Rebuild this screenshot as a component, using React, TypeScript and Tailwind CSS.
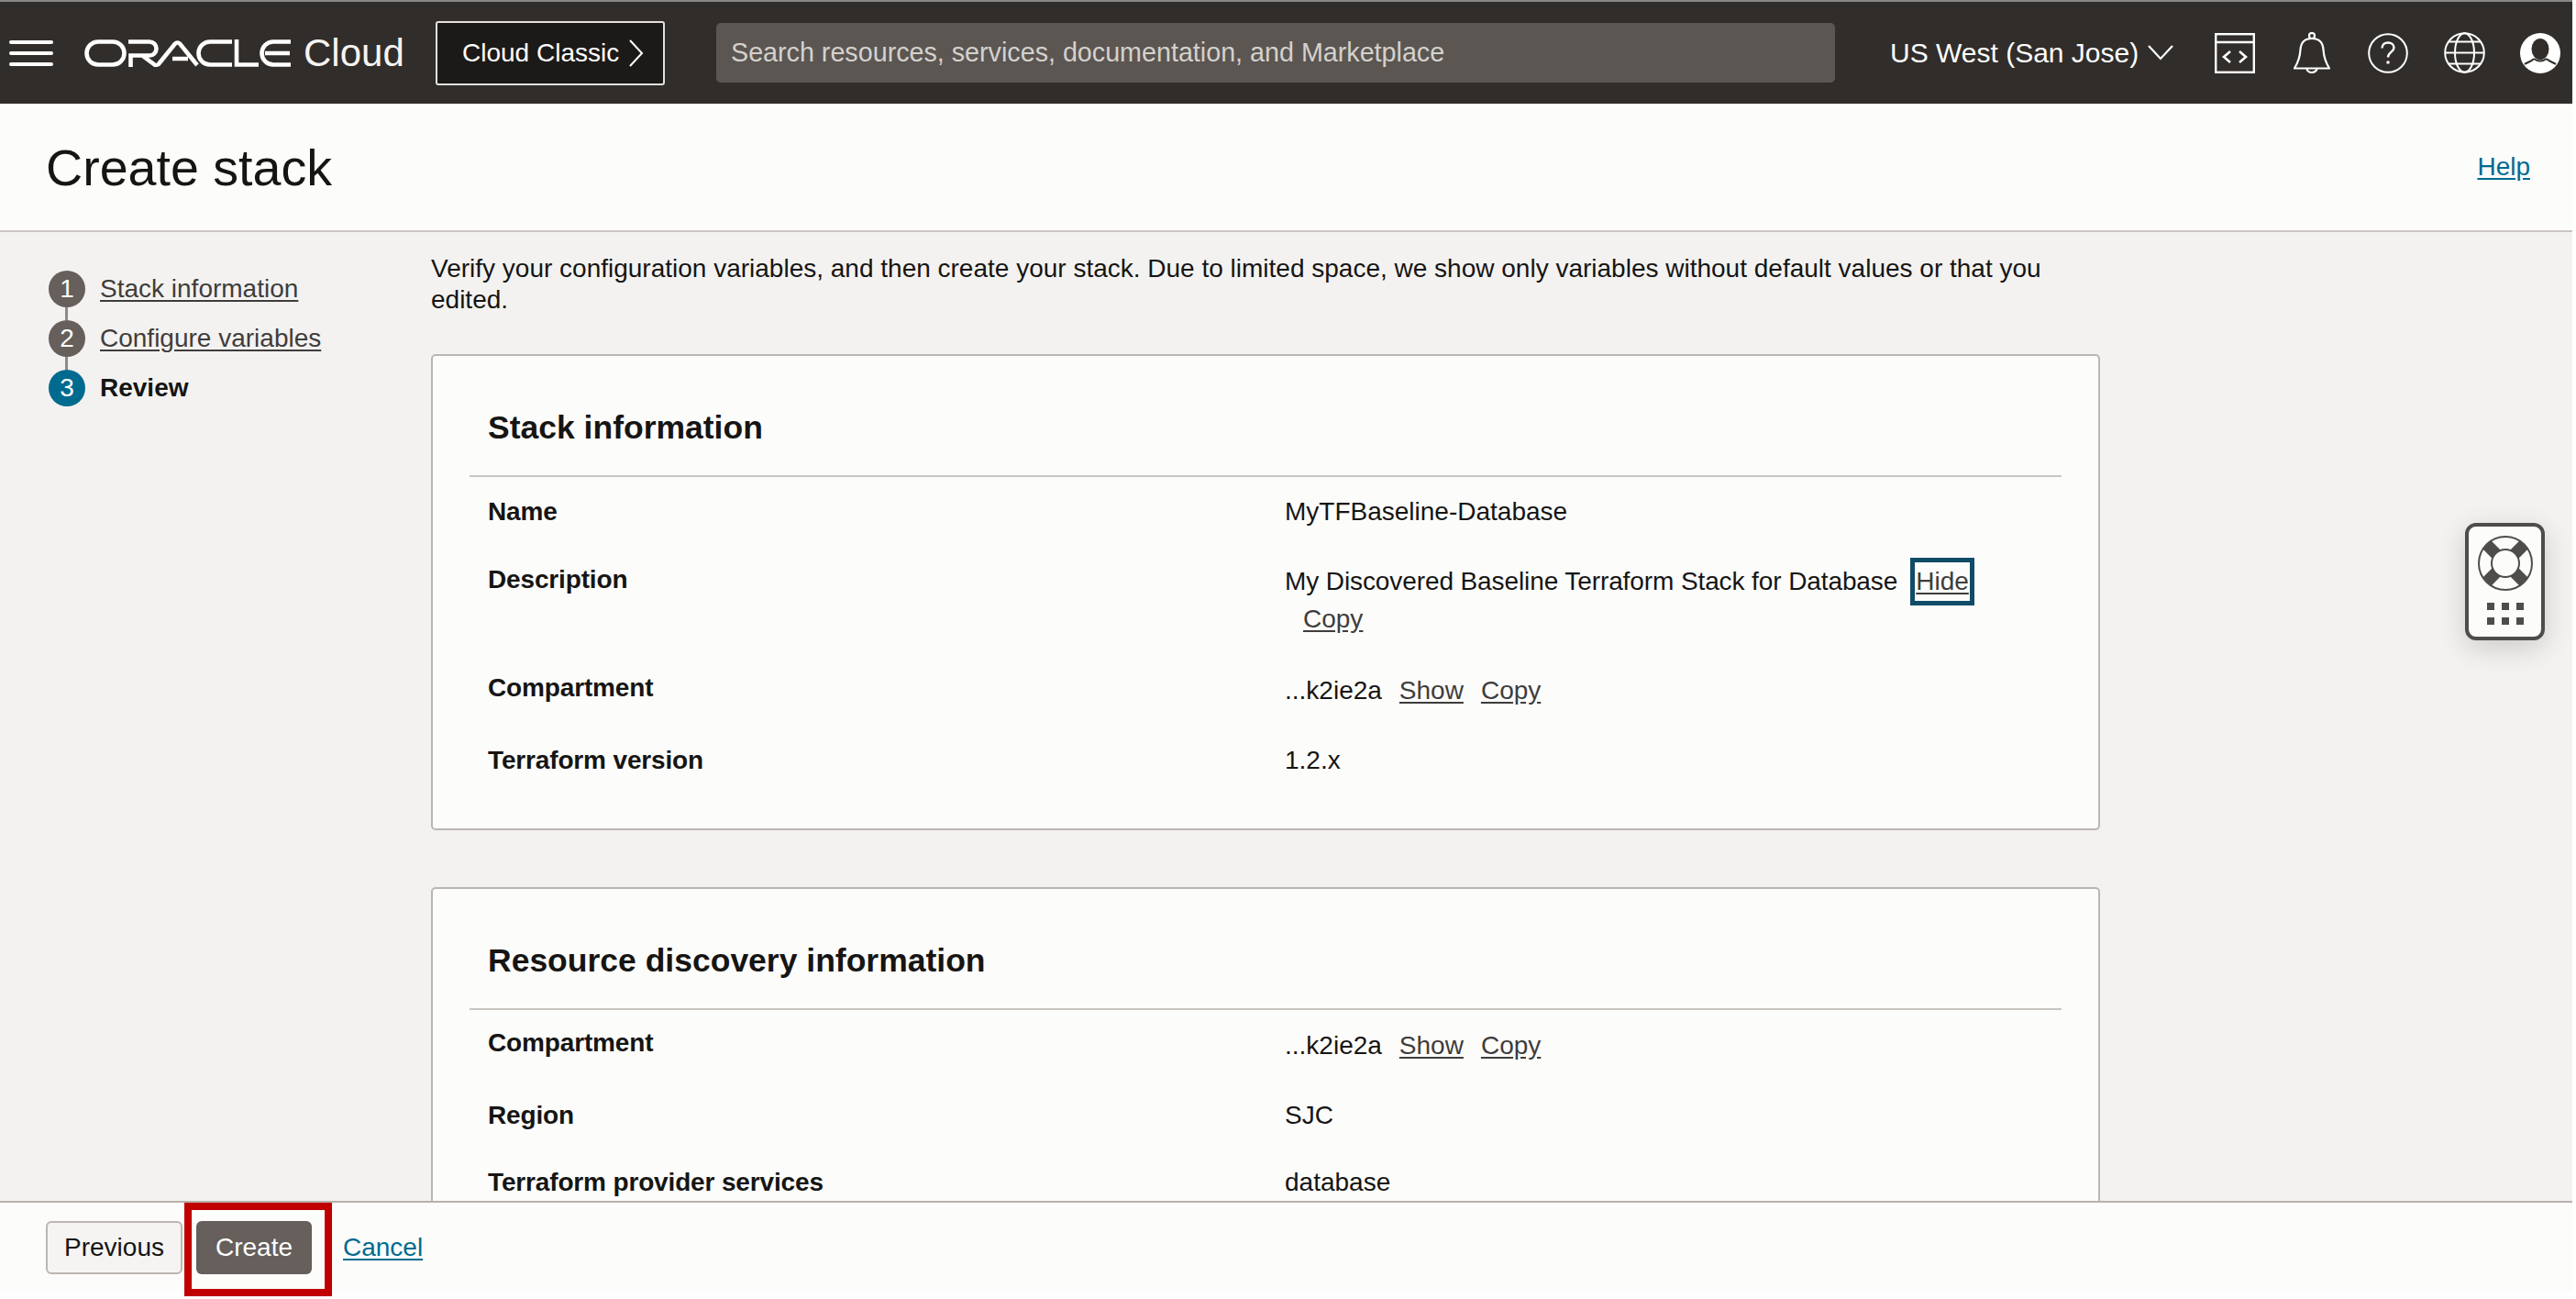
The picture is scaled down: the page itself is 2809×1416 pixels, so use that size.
import React from "react";

const link = "underline underline-offset-[3px] text-[#3f3d3b]";

function OracleLogo() {
  return (
    <svg width="226" height="30" viewBox="0 0 226 30" fill="none" stroke="#fff" strokeWidth="4.6" className="shrink-0">
      <rect x="2.5" y="2.5" width="41" height="25" rx="12.5" />
      <path d="M48 2.5H71a7.5 7.5 0 0 1 0 15H50.5V30M63 17.5L80 30" />
      <path d="M80 28L99 4.5a3.5 3.5 0 0 1 5 0L123 28M96 21H113" />
      <path d="M161 2.5H137a12.5 12.5 0 0 0 0 25H161" />
      <path d="M166 0V27.5H190" />
      <path d="M225 2.5H206a12.5 12.5 0 0 0 0 25H225M197 15H224" />
    </svg>
  );
}

function CodeIcon() {
  return (
    <svg width="44" height="44" viewBox="0 0 44 44" fill="none" stroke="#fff" strokeWidth="2.4" className="shrink-0">
      <rect x="1.2" y="1.2" width="41.6" height="41.6" />
      <path d="M1 10H43" />
      <path d="M17 20L10 26L17 32M27 20L34 26L27 32" strokeWidth="2.6" />
    </svg>
  );
}

function BellIcon() {
  return (
    <svg width="40" height="45" viewBox="0 0 40 45" fill="none" stroke="#fff" strokeWidth="2.2" className="shrink-0">
      <circle cx="20" cy="4" r="3" />
      <path d="M20 7C12 7 8 12 7.5 19C7 28 5 33 1 39.5H39C35 33 33 28 32.5 19C32 12 28 7 20 7Z" strokeLinejoin="round" />
      <path d="M14.5 39.5a5.5 4.5 0 0 0 11 0" />
    </svg>
  );
}

function HelpIcon() {
  return (
    <svg width="44" height="44" viewBox="0 0 44 44" fill="none" stroke="#fff" strokeWidth="2" className="shrink-0">
      <circle cx="22" cy="22" r="20.8" />
      <path d="M15.5 16.5C15.5 12.5 18.5 10.5 22 10.5C25.5 10.5 28.5 12.5 28.5 16C28.5 20.5 22 21 22 26.5" strokeWidth="2.4" />
      <circle cx="22" cy="32" r="1.8" fill="#fff" stroke="none" />
    </svg>
  );
}

function GlobeIcon() {
  return (
    <svg width="45" height="45" viewBox="0 0 45 45" fill="none" stroke="#fff" strokeWidth="2" className="shrink-0">
      <circle cx="22.5" cy="22.5" r="21.3" />
      <ellipse cx="22.5" cy="22.5" rx="10.5" ry="21.3" />
      <path d="M1 22.5H44M5 10.5H40M5 34.5H40" />
    </svg>
  );
}

function AvatarIcon() {
  return (
    <svg width="44" height="44" viewBox="0 0 44 44" className="shrink-0">
      <circle cx="22" cy="22" r="22" fill="#fff" />
      <ellipse cx="22" cy="17.5" rx="9.5" ry="11.5" fill="#312d2a" />
      <path d="M15 28C14 30 8 32 5 34" stroke="#312d2a" strokeWidth="2" fill="none" />
      <path d="M29 28C30 30 36 32 39 34" stroke="#312d2a" strokeWidth="2" fill="none" />
      <path d="M15 28Q22 33 29 28" stroke="#312d2a" strokeWidth="2" fill="none" />
    </svg>
  );
}

function TopBar() {
  return (
    <header className="h-[113px] shrink-0 flex items-center bg-[#312d2a] border-t-2 border-[#8a8886] pl-[10px] text-white">
      <div className="flex flex-col gap-[8px] w-[48px] shrink-0">
        <span className="h-[4px] rounded bg-white" />
        <span className="h-[4px] rounded bg-white" />
        <span className="h-[4px] rounded bg-white" />
      </div>
      <div className="ml-[34px]">
        <OracleLogo />
      </div>
      <span className="ml-[13px] w-[144px] text-[42px] leading-none text-[#f5f4f2]">Cloud</span>
      <button className="h-[70px] w-[250px] flex items-center pl-[27px] bg-[#1c1a18] border-2 border-[#e4e1dd] rounded-[3px] text-[28px] shrink-0">
        Cloud Classic
        <svg width="16" height="30" viewBox="0 0 16 30" fill="none" stroke="#fff" strokeWidth="2" className="ml-[11px]">
          <path d="M1 1L14 15L1 29" />
        </svg>
      </button>
      <div className="ml-[56px] h-[65px] w-[1220px] shrink-0 rounded-[5px] bg-[#5b5652] flex items-center pl-[16px] text-[28.7px] text-[#d4d1cd]">
        Search resources, services, documentation, and Marketplace
      </div>
      <span className="ml-[60px] text-[30px] shrink-0 whitespace-nowrap">US West (San Jose)</span>
      <svg width="28" height="17" viewBox="0 0 28 17" fill="none" stroke="#fff" strokeWidth="2.2" className="ml-[10px] shrink-0">
        <path d="M1 1L14 15L27 1" />
      </svg>
      <div className="ml-[45px] flex items-center">
        <CodeIcon />
        <span className="ml-[42px]"><BellIcon /></span>
        <span className="ml-[41px]"><HelpIcon /></span>
        <span className="ml-[39px]"><GlobeIcon /></span>
        <span className="ml-[38px]"><AvatarIcon /></span>
      </div>
    </header>
  );
}

function Step({ n, label, active }: { n: number; label: string; active?: boolean }) {
  return (
    <div className="h-[40px] flex items-center gap-[16px]">
      <span className={`w-[40px] h-[40px] rounded-full flex items-center justify-center text-white text-[28px] ${active ? "bg-[#006b8f]" : "bg-[#665f5b]"}`}>
        {n}
      </span>
      {active ? <span className="font-bold text-[#161513]">{label}</span> : <a className={link}>{label}</a>}
    </div>
  );
}

function Connector() {
  return <div className="w-[3px] h-[14px] ml-[18px] bg-[#8f8a85]" />;
}

function Sidebar() {
  return (
    <aside className="w-[470px] shrink-0 pl-[53px] pt-[42px] text-[28px]">
      <Step n={1} label="Stack information" />
      <Connector />
      <Step n={2} label="Configure variables" />
      <Connector />
      <Step n={3} label="Review" active />
    </aside>
  );
}

function Row({ label, h, children }: { label: string; h: string; children: React.ReactNode }) {
  return (
    <div className={`grid grid-cols-[869px_1fr] pl-[20px] ${h}`}>
      <div className="font-bold leading-[34px] tracking-[-0.15px]">{label}</div>
      <div className="leading-[34px]">{children}</div>
    </div>
  );
}

function OcidValue() {
  return (
    <div className="flex gap-[19px] mt-[3px]">
      <span>...k2ie2a</span>
      <a className={link}>Show</a>
      <a className={link}>Copy</a>
    </div>
  );
}

function Card({ title, cls, rowsCls, children }: { title: string; cls: string; rowsCls: string; children: React.ReactNode }) {
  return (
    <section className={`w-[1820px] shrink-0 bg-[#fcfcfb] border-2 border-[#bcb6b1] rounded-[5px] px-[40px] ${cls}`}>
      <h2 className="pt-[56px] pb-[30px] pl-[20px] text-[35.5px] leading-[44px] font-bold border-b-2 border-[#c9c5c0]">{title}</h2>
      <div className={`text-[28px] ${rowsCls}`}>{children}</div>
    </section>
  );
}

function Widget() {
  return (
    <div className="absolute right-[30px] top-[317px] w-[87px] h-[128px] bg-[#fcfcfb] border-4 border-[#4f4d4a] rounded-[12px] shadow-[0_8px_30px_rgba(0,0,0,0.16)] flex flex-col items-center pt-[10px]">
      <svg width="60" height="60" viewBox="0 0 60 60">
        <circle cx="30" cy="30" r="29" fill="#fcfcfb" stroke="#4f4d4a" strokeWidth="2" />
        <g stroke="#4f4d4a" strokeWidth="13">
          <path d="M10 10L20 20M50 10L40 20M10 50L20 40M50 50L40 40" />
        </g>
        <circle cx="30" cy="30" r="15" fill="#fcfcfb" stroke="#4f4d4a" strokeWidth="2" />
      </svg>
      <div className="mt-[13px] grid grid-cols-3 gap-x-[8px] gap-y-[8px]">
        {[0, 1, 2, 3, 4, 5].map((i) => (
          <span key={i} className="w-[8px] h-[8px] bg-[#4f4d4a]" />
        ))}
      </div>
    </div>
  );
}

export default function App() {
  return (
    <div className="w-[2809px] h-[1416px] bg-white overflow-hidden text-[#161513] font-['Liberation_Sans',Arial,sans-serif]">
      <div className="relative w-[2805px] h-[1409px] flex flex-col bg-[#f3f2f1]">
        <TopBar />
        <div className="h-[140px] shrink-0 flex items-center justify-between bg-[#fcfcfb] border-b-2 border-[#c9c5c0] pl-[50px] pr-[46px]">
          <h1 className="mt-[3px] text-[55.6px] leading-none font-normal">Create stack</h1>
          <a className="text-[28px] underline underline-offset-[3px] text-[#006b8f]">Help</a>
        </div>
        <main className="relative flex-1 min-h-0 flex overflow-hidden">
          <Sidebar />
          <div className="flex flex-col pt-[23px]">
            <p className="w-[1800px] text-[28px] leading-[34px]">
              Verify your configuration variables, and then create your stack. Due to limited space, we show only variables without default values or that you edited.
            </p>
            <Card title="Stack information" cls="mt-[42px] h-[519px]" rowsCls="pt-[21px]">
              <Row label="Name" h="h-[74px]">MyTFBaseline-Database</Row>
              <Row label="Description" h="h-[118px]">
                <div className="h-[41px] -mt-[2px] flex items-center gap-[19px] whitespace-nowrap">
                  <span className="tracking-[-0.1px]">My Discovered Baseline Terraform Stack for Database</span>
                  <a className={`${link} inline-block leading-[42px] px-[1px] outline-[5px] outline-solid outline-[#0f4c67]`}>Hide</a>
                </div>
                <a className={`${link} block leading-[41px] ml-[20px]`}>Copy</a>
              </Row>
              <Row label="Compartment" h="h-[79px]"><OcidValue /></Row>
              <Row label="Terraform version" h="h-[79px]">1.2.x</Row>
            </Card>
            <Card title="Resource discovery information" cls="mt-[62px] h-[500px]" rowsCls="pt-[19px]">
              <Row label="Compartment" h="h-[79px]"><OcidValue /></Row>
              <Row label="Region" h="h-[73px]">SJC</Row>
              <Row label="Terraform provider services" h="h-[79px]">database</Row>
            </Card>
          </div>
          <Widget />
        </main>
        <footer className="h-[100px] shrink-0 flex items-center bg-[#fcfcfb] border-t-2 border-[#b8b2ab] pl-[50px] text-[28px]">
          <button className="h-[58px] w-[149px] rounded-[6px] border-2 border-[#bcb6b1] bg-[#f5f4f2]">Previous</button>
          <button className="ml-[15px] h-[58px] w-[126px] rounded-[6px] bg-[#665f5b] text-white">Create</button>
          <a className="ml-[34px] underline underline-offset-[3px] text-[#006b8f]">Cancel</a>
        </footer>
        <div className="absolute left-[201px] top-[1311px] w-[161px] h-[102px] border-[8px] border-[#c00000]" />
      </div>
    </div>
  );
}
